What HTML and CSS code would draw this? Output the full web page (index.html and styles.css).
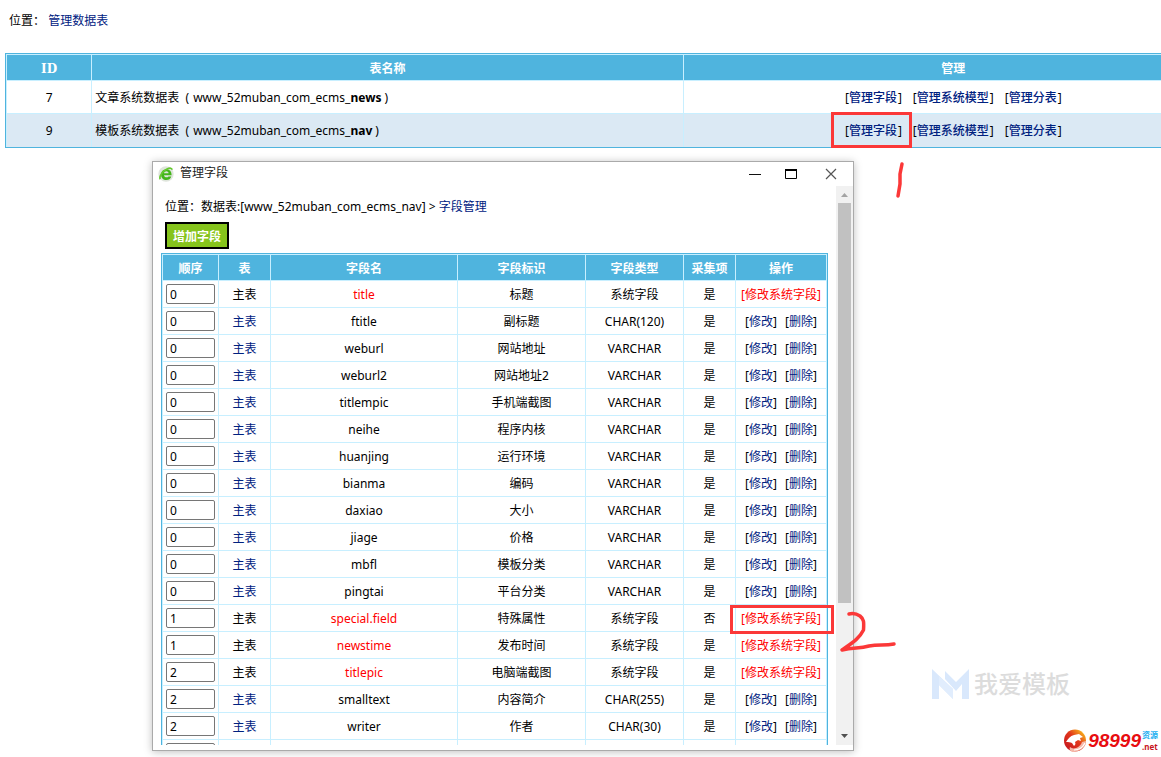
FILE: index.html
```
<!DOCTYPE html>
<html lang="zh-CN">
<head>
<meta charset="utf-8">
<title>管理数据表</title>
<link rel="stylesheet" href="styles.css">
</head>
<body>
<div class="page">
  <nav class="crumb">位置： <a href="#">管理数据表</a></nav>
  <table class="grid tables">
    <colgroup><col class="c-id"><col class="c-table"><col></colgroup>
    <thead><tr><th class="id">ID</th><th>表名称</th><th>管理</th></tr></thead>
    <tbody>
      <tr><td>7</td><td class="name">文章系统数据表&nbsp; ( <span class="prefix">www_52muban_com_ecms_<b>news</b> )</span></td><td class="manage"><span>[<a href="#">管理字段</a>]</span><span>[<a href="#">管理系统模型</a>]</span><span>[<a href="#">管理分表</a>]</span></td></tr>
      <tr class="active"><td>9</td><td class="name">模板系统数据表&nbsp; ( <span class="prefix">www_52muban_com_ecms_<b>nav</b> )</span></td><td class="manage"><span>[<a href="#">管理字段</a>]</span><span>[<a href="#">管理系统模型</a>]</span><span>[<a href="#">管理分表</a>]</span></td></tr>
    </tbody>
  </table>

  <section class="window">
    <header class="titlebar">
      <svg class="app-icon" width="16" height="16" viewBox="0 0 16 16"><circle cx="8" cy="8" r="7.700" fill="#dfe5dc"/><path d="M13.600 9.200H6c.2 1.400 1.200 2.100 2.500 2.100 1 0 1.600-.3 2-.9h2.800c-.7 2.300-2.500 3.600-4.900 3.600-3.300 0-5.300-2.100-5.300-5.300 0-3.300 2.200-5.500 5.300-5.500 3.300 0 5.300 2.300 5.200 6zM6 7.200h4.600C10.400 6 9.600 5.300 8.400 5.300S6.300 6 6 7.200z" fill="#43b51a"/><path d="M2.200 13.200C.8 11 4 5.500 9 3c3-1.500 5.200-1 4.900.8" fill="none" stroke="#66c92f" stroke-width="1.600"/></svg>
      <span class="title">管理字段</span>
      <div class="winbtns">
        <button class="winbtn min" aria-label="最小化"><svg width="14" height="12" viewBox="0 0 14 12"><path d="M1 6.500h12" stroke="#111"/></svg></button>
        <button class="winbtn" aria-label="最大化"><svg width="14" height="12" viewBox="0 0 14 12"><path d="M1.500 1v9.500h11V1" fill="none" stroke="#000"/><path d="M1 2h12" stroke="#000" stroke-width="2"/></svg></button>
        <button class="winbtn close" aria-label="关闭"><svg width="12" height="12" viewBox="0 0 12 12"><path d="M1 1l10 10M11 1L1 11" stroke="#555" stroke-width="1.200"/></svg></button>
      </div>
    </header>
    <div class="body">
      <div class="content">
        <nav class="path">位置：数据表:[www_52muban_com_ecms_nav] &gt; <a href="#">字段管理</a></nav>
        <button class="add">增加字段</button>
        <table class="grid fields">
          <colgroup><col class="f-order"><col class="f-small"><col class="f-name"><col class="f-label"><col class="f-type"><col class="f-small"><col></colgroup>
          <thead><tr><th>顺序</th><th>表</th><th>字段名</th><th>字段标识</th><th>字段类型</th><th>采集项</th><th>操作</th></tr></thead>
          <tbody id="rows"></tbody>
        </table>
      </div>
      <div class="scrollbar">
        <svg width="17" height="17" viewBox="0 0 17 17"><path d="M5 11l3.500-4 3.500 4z" fill="#a3a3a3"/></svg>
        <div class="thumb"></div>
        <svg class="down" width="17" height="17" viewBox="0 0 17 17"><path d="M5 6l3.500 4 3.500-4z" fill="#505050"/></svg>
      </div>
    </div>
  </section>

  <div class="mark mark-manage"></div>
  <div class="mark mark-edit"></div>
  <svg class="stroke one" width="12" height="40" viewBox="0 0 12 40"><path d="M7 3L5 13 5 23 3 35" fill="none" stroke="#fb3838" stroke-width="3.500" stroke-linecap="round" stroke-linejoin="round"/></svg>
  <svg class="stroke two" width="60" height="44" viewBox="0 0 60 44"><path d="M10 5c4-1 8 0 11 2 4 3 4 6 3.500 14C20 30 13 34 3 41c12-3 17-1 27-4 10-2 15 0 25-2" fill="none" stroke="#fb3838" stroke-width="3.500" stroke-linecap="round" stroke-linejoin="round"/></svg>

  <div class="watermark">
    <svg width="37" height="30" viewBox="0 0 37 30"><path d="M0 0l21 20v10L7 16v14H0z" fill="#d9e8fc"/><path d="M7 7l14 13v10L7 16z" fill="#e1edfd"/><path d="M13 2l11 11L37 0v30h-7V15l-6 7-11-12z" fill="#d9e8fc"/></svg>
    <span>我爱模板</span>
  </div>
  <div class="sitelogo">
    <svg width="24" height="24" viewBox="0 0 24 24"><defs><linearGradient id="g" x1="0" y1="1" x2="1" y2="0"><stop offset="0" stop-color="#c01020"/><stop offset=".55" stop-color="#e2381c"/><stop offset="1" stop-color="#ffe01a"/></linearGradient></defs><circle cx="12" cy="11.500" r="11" fill="url(#g)"/><path d="M3 13c2-3 4-6 8-7l5-1 4 3-3 1 1 3-3-1-3 2c1 2 0 3-1 4l-2-3c-2-1-3-1-6-1z" fill="#fff"/><path d="M9 23c-2-1-3-3-2-5 3 3 10 1 12-5l4-1c0 6-6 11-14 11z" fill="#f6b8a8"/><path d="M11 21c5 0 9-3 11-7" fill="none" stroke="#fff" stroke-width="1.200"/></svg>
    <span class="num">98999</span>
    <span class="suffix"><span class="res">资源</span><span class="net">.net</span></span>
  </div>
</div>
<script src="rows.js"></script>
</body>
</html>
```

FILE: styles.css
```
* { box-sizing: border-box; }
body {
  margin: 0;
  background: #fff;
  color: #000;
  font: 12px/18px "Noto Sans", "Noto Sans CJK SC", sans-serif;
}
a { color: #00217f; text-decoration: none; }
button { font: inherit; padding: 0; }
.page { position: relative; min-height: 100vh; overflow: hidden; }
.crumb { padding: 12px 9px 23px; }

.grid {
  border: 1px solid #4fb4de;
  border-collapse: separate;
  border-spacing: 0;
  table-layout: fixed;
}
.grid th, .grid td {
  border: 0 solid #c8efff;
  border-width: 1px 0 0 1px;
  padding: 2px 0 0;
  text-align: center;
}
.grid th { height: 26px; background: #4fb4de; color: #fff; font-weight: 700; }
.grid .id { font-family: "DejaVu Serif", serif; }

.tables { width: calc(100% + 58px); margin-left: 5px; }
.tables td { height: 33px; }
.tables .name { text-align: left; padding-left: 3px; }
.tables .active td { height: 34px; padding-top: 0; background: #dbe9f4; }
.prefix { margin-left: 1px; }
.c-id { width: 7%; }
.c-table { width: 48.6%; }
.manage a { margin: 0 1px 0 0; font-weight: 500; }
.manage span + span { margin-left: 11px; }

.window {
  position: absolute;
  left: 152px;
  top: 161px;
  width: 702px;
  height: 590px;
  display: flex;
  flex-direction: column;
  padding-bottom: 5px;
  background: #fff;
  border: 1px solid #aaa;
  box-shadow: 0 1px 8px rgba(0, 0, 0, .25);
}
.titlebar { flex: none; height: 24px; display: flex; align-items: center; padding: 0 15px 0 5px; }
.title { flex: 1; margin-left: 6px; line-height: 22px; align-self: flex-start; color: #222; }
.winbtns { display: flex; gap: 22px; }
.winbtn { width: 14px; height: 24px; border: 0; background: none; display: grid; place-items: center; }
.close { margin-left: 4px; }
.body { flex: 1; min-height: 0; display: flex; }
.content { flex: 1; overflow: hidden; padding: 12px 8px 0; }
.path { padding-left: 4px; }
.add {
  display: block;
  width: 64px;
  height: 27px;
  margin: 6px 0 4px 4px;
  padding-top: 2px;
  border: 2px solid #000;
  background: #86c41c;
  color: #fff;
  font-weight: 700;
}
.scrollbar { width: 17px; display: flex; flex-direction: column; align-items: center; background: #f1f1f1; }
.thumb { width: 13px; height: 400px; background: #c1c1c1; }
.scrollbar .down { margin-top: auto; }

.fields { width: 100%; }
.fields td { height: 27px; }
.fields td:first-child { padding-top: 0; }
.fields th:last-child, .fields td:last-child { border-right-width: 1px; }
.fields .sys, .fields .sys a { color: #f00; }
.fields span + span { margin-left: 8px; }
.fields input {
  display: block;
  width: 49px;
  height: 20px;
  margin: 0 0 0 3px;
  padding: 1px 3px 0;
  border: 1px solid #767676;
  border-radius: 2px;
  font: inherit;
  line-height: 16px;
}
.f-order { width: 56px; }
.f-small { width: 52px; }
.f-name { width: 187px; }
.f-label { width: 128px; }
.f-type { width: 98px; }

.mark { position: absolute; border: 3px solid #fb3838; }
.mark-manage { left: 831px; top: 112px; width: 81px; height: 36px; }
.mark-edit { left: 730px; top: 605px; width: 104px; height: 29px; }
.stroke { position: absolute; }
.one { left: 895px; top: 161px; }
.two { left: 839px; top: 609px; }

.watermark {
  position: absolute;
  left: 932px;
  top: 668px;
  display: flex;
  align-items: center;
  gap: 5px;
  color: #dcdcdc;
  font-size: 24px;
  font-weight: 500;
  line-height: 32px;
}
.sitelogo {
  position: absolute;
  right: 3px;
  bottom: 2px;
  display: flex;
  align-items: center;
  font-weight: 700;
}
.num { margin: 0 1px; font: italic 700 19px/28px "Liberation Sans", sans-serif; color: #e80c10; }
.suffix { display: flex; flex-direction: column; font-size: 8px; line-height: 12px; }
.res { color: #18aef0; }
.net { color: #c8141c; }
```

FILE: rows.js
```
const fields = [
  [0, "title", "标题", "系统字段", "是", true],
  [0, "ftitle", "副标题", "CHAR(120)", "是"],
  [0, "weburl", "网站地址", "VARCHAR", "是"],
  [0, "weburl2", "网站地址2", "VARCHAR", "是"],
  [0, "titlempic", "手机端截图", "VARCHAR", "是"],
  [0, "neihe", "程序内核", "VARCHAR", "是"],
  [0, "huanjing", "运行环境", "VARCHAR", "是"],
  [0, "bianma", "编码", "VARCHAR", "是"],
  [0, "daxiao", "大小", "VARCHAR", "是"],
  [0, "jiage", "价格", "VARCHAR", "是"],
  [0, "mbfl", "模板分类", "VARCHAR", "是"],
  [0, "pingtai", "平台分类", "VARCHAR", "是"],
  [1, "special.field", "特殊属性", "系统字段", "否", true],
  [1, "newstime", "发布时间", "系统字段", "是", true],
  [2, "titlepic", "电脑端截图", "系统字段", "是", true],
  [2, "smalltext", "内容简介", "CHAR(255)", "是"],
  [2, "writer", "作者", "CHAR(30)", "是"],
  ["", "", "", "", "", null]
];
document.getElementById("rows").innerHTML = fields.map(([order, name, label, type, collect, system]) => {
  const owner = system === null ? "" : system ? "主表" : '<a href="#">主表</a>';
  const actions = system === null ? "" : system
    ? '<a href="#">[修改系统字段]</a>'
    : '<span>[<a href="#">修改</a>]</span><span>[<a href="#">删除</a>]</span>';
  const mark = system ? ' class="sys"' : "";
  return `<tr><td><input value="${order}" aria-label="顺序 ${name}"></td><td>${owner}</td><td${mark}>${name}</td><td>${label}</td><td>${type}</td><td>${collect}</td><td${mark}>${actions}</td></tr>`;
}).join("");
```
